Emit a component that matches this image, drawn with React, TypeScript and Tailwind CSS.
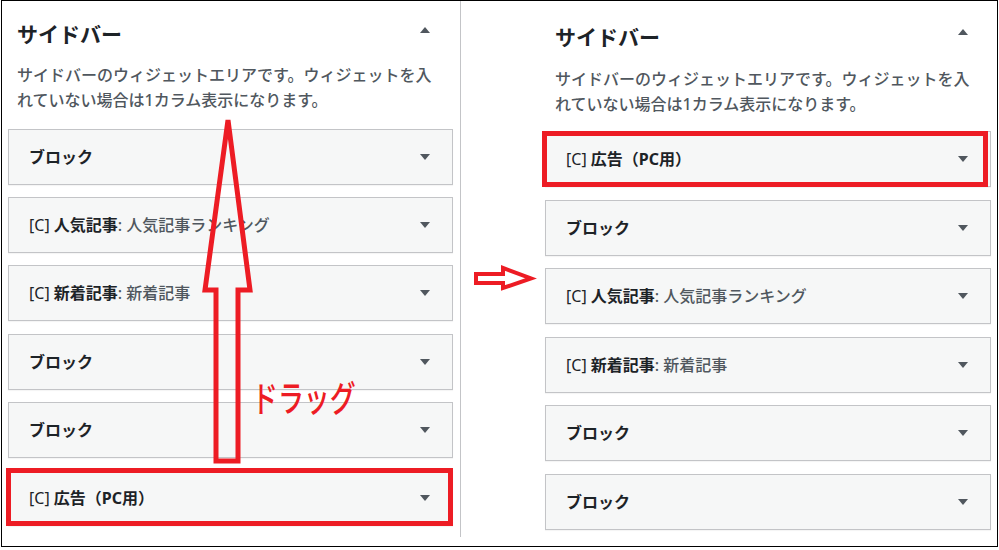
import React from 'react';

type Item = { tag?: boolean; name: string; sub?: string };

const leftItems: Item[] = [
  { name: 'ブロック' },
  { tag: true, name: '人気記事', sub: '人気記事ランキング' },
  { tag: true, name: '新着記事', sub: '新着記事' },
  { name: 'ブロック' },
  { name: 'ブロック' },
  { tag: true, name: '広告（PC用）' },
];

const rightItems: Item[] = [
  { tag: true, name: '広告（PC用）' },
  { name: 'ブロック' },
  { tag: true, name: '人気記事', sub: '人気記事ランキング' },
  { tag: true, name: '新着記事', sub: '新着記事' },
  { name: 'ブロック' },
  { name: 'ブロック' },
];

const Caret = ({ up }: { up?: boolean }) => (
  <svg width="10" height="6" viewBox="0 0 10 6" className="shrink-0">
    <path d={up ? 'M0 6L5 0L10 6Z' : 'M0 0L10 0L5 6Z'} fill="#50575e" />
  </svg>
);

const Widget = ({ item, highlight }: { item: Item; highlight?: 'left' | 'right' }) => (
  <div className="relative flex h-[56px] items-center justify-between border border-[#c3c4c7] bg-[#f6f7f7] pl-[20px] pr-[22px] shadow-[0_1px_1px_rgba(0,0,0,0.04)]">
    <span className="text-[16px] leading-none text-[#1d2327]">
      {item.tag && <span className="font-normal">[C] </span>}
      <span className="font-bold">{item.name}</span>
      {item.sub && <span className="font-medium text-[#50575e]">: {item.sub}</span>}
    </span>
    <Caret />
    {highlight === 'left' && (
      <span className="pointer-events-none absolute -left-[3px] -top-[3px] right-[-1px] -bottom-[1px] border-[5px] border-[#ed1c24]" />
    )}
    {highlight === 'right' && (
      <span className="pointer-events-none absolute -left-[4px] -top-[1px] right-[2px] -bottom-[1px] border-[5px] border-[#ed1c24]" />
    )}
  </div>
);

const AreaHeader = ({ pl }: { pl: string }) => (
  <div className={`flex items-center justify-between pr-[23px] ${pl}`}>
    <h2 className="text-[21px] font-bold leading-[28px] text-[#1d2327]">サイドバー</h2>
    <span className="-mt-[9px]">
      <Caret up />
    </span>
  </div>
);

export default function App() {
  return (
    <div className="relative h-[550px] w-[999px] overflow-hidden bg-white pl-px font-['Noto_Sans','Noto_Sans_CJK_JP',sans-serif]">
      <div className="flex h-[547px] w-[997px] border border-black">
        {/* before */}
        <div className="h-[536px] w-[459px] shrink-0 border-r border-[#c3c4c7] pl-[6px] pr-[7px] pt-[19px]">
          <AreaHeader pl="pl-[9px]" />
          <p className="mt-[14.5px] w-[426px] pl-[9px] text-[16px] font-medium leading-[25px] text-[#50575e]">
            サイドバーのウィジェットエリアです。ウィジェットを入れていない場合は1カラム表示になります。
          </p>
          <div className="mt-[16.5px] flex flex-col gap-[12.2px]">
            {leftItems.map((it, i) => (
              <Widget key={i} item={it} highlight={i === 5 ? 'left' : undefined} />
            ))}
          </div>
        </div>

        {/* after */}
        <div className="flex-1 pl-[84px] pr-[6px] pt-[21.5px]">
          <AreaHeader pl="pl-[10px]" />
          <p className="mt-[16px] w-[436px] pl-[10px] text-[16px] font-medium leading-[25px] text-[#50575e]">
            サイドバーのウィジェットエリアです。ウィジェットを入れていない場合は1カラム表示になります。
          </p>
          <div className="mt-[14.5px] flex flex-col gap-[12.5px]">
            {rightItems.map((it, i) => (
              <Widget key={i} item={it} highlight={i === 0 ? 'right' : undefined} />
            ))}
          </div>
        </div>
      </div>

      {/* annotations */}
      <svg className="pointer-events-none absolute left-0 top-0" width="999" height="550" viewBox="0 0 999 550">
        <polygon
          points="228,120 250,290 238,290 238,461 216,461 216,290 205,290"
          fill="none"
          stroke="#ed1c24"
          strokeWidth="5"
        />
        <polygon
          points="476,274 503,274 503,268 531,278.5 503,288 503,283 476,283"
          fill="none"
          stroke="#ed1c24"
          strokeWidth="4"
        />
      </svg>
      <span className="absolute left-[252px] top-[381px] origin-left scale-x-[0.72] whitespace-nowrap text-[36px] font-medium leading-[36px] text-[#ed1c24]">
        ドラッグ
      </span>
    </div>
  );
}
